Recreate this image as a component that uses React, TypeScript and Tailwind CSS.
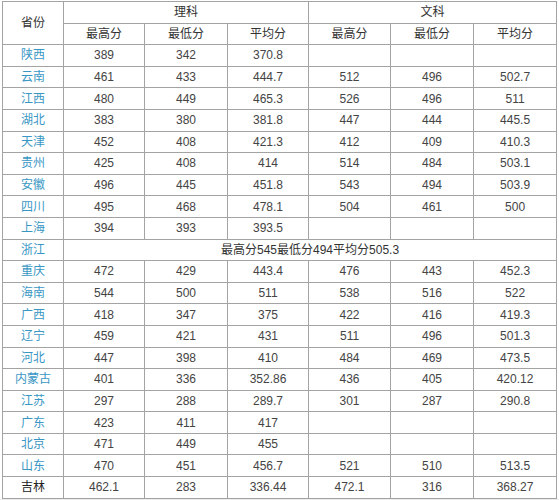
import React from 'react'

type Row = { name: string; li?: string[]; wen?: string[]; merged?: string; plain?: boolean }

const rows: Row[] = [
  { name: '陕西', li: ['389', '342', '370.8'], wen: ['', '', ''] },
  { name: '云南', li: ['461', '433', '444.7'], wen: ['512', '496', '502.7'] },
  { name: '江西', li: ['480', '449', '465.3'], wen: ['526', '496', '511'] },
  { name: '湖北', li: ['383', '380', '381.8'], wen: ['447', '444', '445.5'] },
  { name: '天津', li: ['452', '408', '421.3'], wen: ['412', '409', '410.3'] },
  { name: '贵州', li: ['425', '408', '414'], wen: ['514', '484', '503.1'] },
  { name: '安徽', li: ['496', '445', '451.8'], wen: ['543', '494', '503.9'] },
  { name: '四川', li: ['495', '468', '478.1'], wen: ['504', '461', '500'] },
  { name: '上海', li: ['394', '393', '393.5'], wen: ['', '', ''] },
  { name: '浙江', merged: '最高分545最低分494平均分505.3' },
  { name: '重庆', li: ['472', '429', '443.4'], wen: ['476', '443', '452.3'] },
  { name: '海南', li: ['544', '500', '511'], wen: ['538', '516', '522'] },
  { name: '广西', li: ['418', '347', '375'], wen: ['422', '416', '419.3'] },
  { name: '辽宁', li: ['459', '421', '431'], wen: ['511', '496', '501.3'] },
  { name: '河北', li: ['447', '398', '410'], wen: ['484', '469', '473.5'] },
  { name: '内蒙古', li: ['401', '336', '352.86'], wen: ['436', '405', '420.12'] },
  { name: '江苏', li: ['297', '288', '289.7'], wen: ['301', '287', '290.8'] },
  { name: '广东', li: ['423', '411', '417'], wen: ['', '', ''] },
  { name: '北京', li: ['471', '449', '455'], wen: ['', '', ''] },
  { name: '山东', li: ['470', '451', '456.7'], wen: ['521', '510', '513.5'] },
  { name: '吉林', li: ['462.1', '283', '336.44'], wen: ['472.1', '316', '368.27'], plain: true },
]

const font = { fontFamily: '"Liberation Sans", Arial, "Noto Sans CJK SC", sans-serif' }
const cell = 'border border-[#a3a3a3] text-center text-[12px] leading-none p-0'

export default function App() {
  return (
    <div className="w-[559px] h-[500px] bg-white flex flex-col" style={font}>
      <div className="pl-[2px] pt-px">
        <table className="border-collapse table-fixed w-[554px] border border-[#8a8a8a] text-[#444]">
          <colgroup>
            <col className="w-[61px]" />
            <col className="w-[81px]" />
            <col className="w-[83px]" />
            <col className="w-[81px]" />
            <col className="w-[82px]" />
            <col className="w-[83px]" />
            <col className="w-[83px]" />
          </colgroup>
          <thead>
            <tr className="h-[21.6px]">
              <th rowSpan={2} className={`${cell} font-normal text-[#333]`}>省份</th>
              <th colSpan={3} className={`${cell} font-normal text-[#333]`}>理科</th>
              <th colSpan={3} className={`${cell} font-normal text-[#333]`}>文科</th>
            </tr>
            <tr className="h-[21.6px]">
              {['最高分', '最低分', '平均分', '最高分', '最低分', '平均分'].map((h, i) => (
                <th key={i} className={`${cell} font-normal text-[#333]`}>{h}</th>
              ))}
            </tr>
          </thead>
          <tbody>
            {rows.map(r => (
              <tr key={r.name} className="h-[21.6px]">
                <td className={`${cell} ${r.plain ? 'text-[#222]' : 'text-[#3a97c4]'}`}>{r.name}</td>
                {r.merged ? (
                  <td colSpan={6} className={`${cell} text-[#333]`}>{r.merged}</td>
                ) : (
                  [...(r.li ?? []), ...(r.wen ?? [])].map((v, i) => (
                    <td key={i} className={cell}>{v}</td>
                  ))
                )}
              </tr>
            ))}
          </tbody>
        </table>
      </div>
      <div className="flex-1 bg-[#ececec]" />
    </div>
  )
}
